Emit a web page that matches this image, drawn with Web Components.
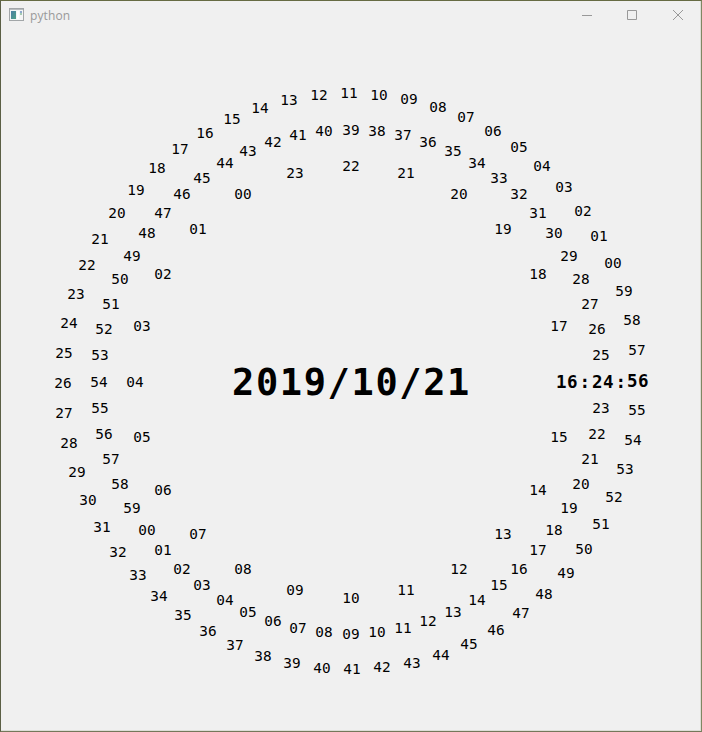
<!DOCTYPE html>
<html lang="en">
<head>
<meta charset="utf-8">
<title>python</title>
<style>html,body{margin:0;height:100%;overflow:hidden;background:#f0f0f0}</style>
</head>
<body>
<app-window>
  <title-bar slot="bar">python</title-bar>
  <ring-clock></ring-clock>
</app-window>
<script>
class AppWindow extends HTMLElement {
  constructor() {
    super();
    this.attachShadow({mode: 'open'}).innerHTML = `
      <style>
        :host{display:grid;grid-template-rows:30px 1fr;box-sizing:border-box;width:702px;height:732px;background:#f0f0f0;
          border:1px solid #666b43;border-left-color:#5b5f45;border-right-color:#7f8763;border-bottom-color:#74785a;
          box-shadow:inset -1px -1px #dcddd6}
      </style>
      <slot name="bar"></slot><slot></slot>`;
  }
}
class TitleBar extends HTMLElement {
  constructor() {
    super();
    this.attachShadow({mode: 'open'}).innerHTML = `
      <style>
        :host{display:flex;align-items:center;height:30px;font:12px/18px "Open Sans","Noto Sans",sans-serif;color:#999}
        .icon{margin:-3px 6px 0 8px}
        .name{flex:1;letter-spacing:.1px}
        .buttons{display:flex}
        .buttons svg{display:block;width:46px;height:30px}
        svg{flex:none}
      </style>
      <svg class="icon" width="15" height="13" viewBox="0 0 15 13" shape-rendering="crispEdges">
        <defs><linearGradient id="g" x1="0" y1="0" x2="1" y2="1"><stop stop-color="#4d7fa5"/><stop offset="1" stop-color="#4fa287"/></linearGradient></defs>
        <path d="M.5.5h14v12H.5z" fill="#f5f6f6" stroke="#a2a6a8"/>
        <path d="M1 1h13v1H1z" fill="#b9bdbf"/>
        <path d="M2 3h5v8H2z" fill="url(#g)"/><path d="M8 3h2v8H8z" fill="#fff"/>
        <path d="M11 3h2v2h-2z" fill="#8fa9ce"/><path d="M11 5h2v2h-2z" fill="#a5cbb3"/>
      </svg>
      <span class="name"><slot></slot></span>
      <span class="buttons">
        <svg viewBox="0 0 46 30"><path d="M19 14.500h10" stroke="#999"/></svg>
        <svg viewBox="0 0 46 30"><path d="M18.500 9.500h9v9h-9z" fill="none" stroke="#999"/></svg>
        <svg viewBox="0 0 46 30"><path d="M18 9l10 10M28 9l-10 10" stroke="#999"/></svg>
      </span>`;
  }
}
class ClockLabel extends HTMLElement {
  connectedCallback() {
    const text = this.getAttribute('text'), size = +this.getAttribute('size') || 14.4;
    const bold = this.hasAttribute('bold'), adv = +this.getAttribute('advance') || 8.8;
    const w = text.length * adv, spacing = adv - size * 0.602;
    this.style.left = this.getAttribute('x') + 'px';
    this.style.top = this.getAttribute('y') + 'px';
    this.attachShadow({mode: 'open'}).innerHTML = `
      <style>
        :host{position:absolute;display:block;width:${w}px;height:30px;
          margin:-15px 0 0 ${-w / 2}px;color:#000;white-space:nowrap;letter-spacing:${spacing}px;
          font:${bold ? 700 : 400} ${size}px/30px "DejaVu Sans Mono","Liberation Mono",monospace}
      </style>${text}`;
  }
}
class RingClock extends HTMLElement {
  constructor() {
    super();
    const label = (text, x, y, extra = '') => `<clock-label text="${text}" x="${x}" y="${y}" ${extra}></clock-label>`;
    const ring = (count, current, radius, shift, cx, cy) => {
      let out = '';
      for (let k = 0; k < count; k++) {
        if (k === current) continue;
        const a = ((k - current) * 360 / count + shift) * Math.PI / 180;
        out += label(String(k).padStart(2, '0'),
          Math.floor(cx + radius * Math.cos(a)), Math.floor(cy - radius * Math.sin(a)));
      }
      return out;
    };
    const time = 'size="17.5" advance="11" bold';
    this.attachShadow({mode: 'open'}).innerHTML = `
      <style>:host{display:block;position:relative}</style>
      ${ring(60, 56, 288, .3, 350.1, 350.7)}${ring(60, 24, 252, 0, 350.01, 351.01)}${ring(24, 16, 216, 0, 350.01, 351.01)}
      ${label('2019/10/21', 350.5, 352, 'size="37" advance="23.9" bold')}
      ${label('16', 566, 351, time)}${label(':', 584, 351, time)}
      ${label('24', 602, 351, time)}${label(':', 620, 351, time)}
      ${label('56', 637, 350, time)}`;
  }
}
customElements.define('app-window', AppWindow);
customElements.define('title-bar', TitleBar);
customElements.define('clock-label', ClockLabel);
customElements.define('ring-clock', RingClock);
</script>
</body>
</html>
